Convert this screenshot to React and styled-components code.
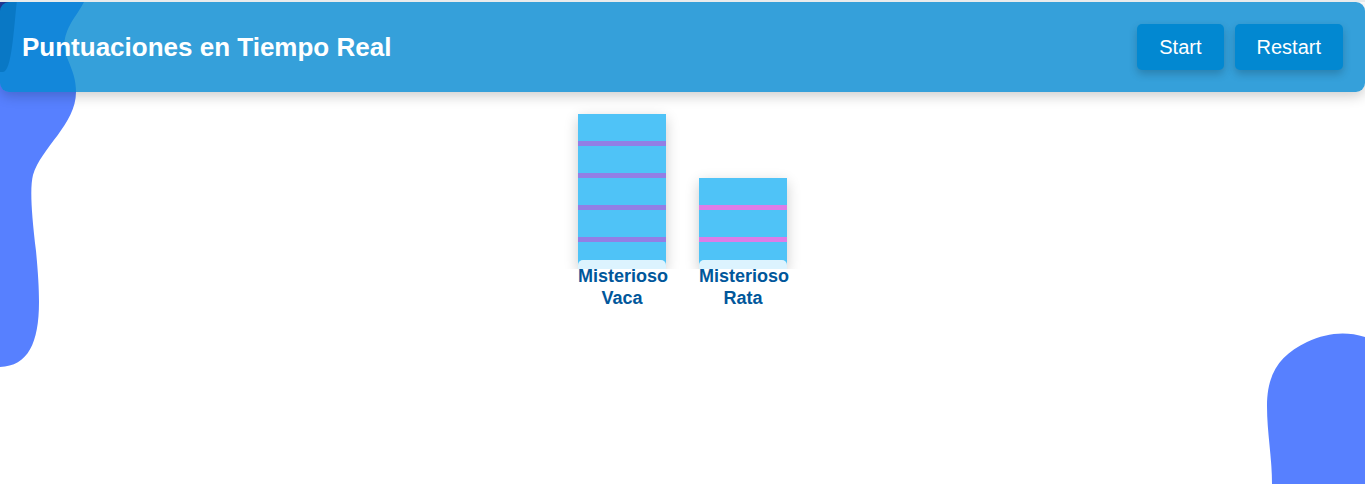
import React from "react";
import styled, { createGlobalStyle } from "styled-components";

const GlobalStyle = createGlobalStyle`
  * { box-sizing: border-box; }
  body {
    margin: 0;
    background: #fff;
    font-family: Arial, "Liberation Sans", sans-serif;
  }
`;

const Page = styled.div`
  position: relative;
  min-height: 100vh;
  overflow: hidden;
  border-top: 2px solid #e9ebec;
`;

const LeftBlob = styled.svg`
  position: absolute;
  top: 0;
  left: 0;
`;

const RightBlob = styled.svg`
  position: absolute;
  right: 0;
  bottom: 0;
`;

const Header = styled.header`
  position: relative;
  display: flex;
  align-items: center;
  justify-content: space-between;
  padding: 22px;
  border-radius: 9px;
  background: rgba(2, 136, 209, 0.8);
  box-shadow: 0 4px 13px rgba(0, 0, 0, 0.2);
`;

const Title = styled.h1`
  margin: 0;
  color: #fff;
  font-size: 26px;
  line-height: 30px;
`;

const Actions = styled.div`
  display: flex;
  gap: 11px;
`;

const Button = styled.button`
  padding: 11px 22px;
  border: 0;
  border-radius: 5px;
  background: #0288d1;
  color: #fff;
  font-family: inherit;
  font-size: 20px;
  line-height: 24px;
  box-shadow: 0 4px 9px rgba(0, 0, 0, 0.2);
  cursor: pointer;
`;

const Chart = styled.main`
  position: relative;
  display: flex;
  justify-content: center;
  align-items: flex-end;
  gap: 33px;
  padding: 22px;
`;

const Player = styled.div`
  display: flex;
  flex-direction: column;
  width: 88px;
`;

const Bar = styled.div`
  height: ${(p) => p.$score * 32 + 27}px;
  background: repeating-linear-gradient(
    #4fc3f7 0 27px,
    ${(p) => p.$stripe} 27px 32px
  );
  box-shadow: 0 4px 13px rgba(0, 0, 0, 0.2);
  clip-path: inset(-22px -22px 0);
`;

const Name = styled.div`
  position: relative;
  margin-top: -9px;
  padding: 5px 0;
  border-radius: 5px;
  background: rgba(255, 255, 255, 0.8);
  color: #01579b;
  font-size: 18px;
  font-weight: bold;
  line-height: 22px;
  text-align: center;
`;

const players = [
  { name: "Misterioso Vaca", score: 4, stripe: "#937ee5" },
  { name: "Misterioso Rata", score: 2, stripe: "#dc7ce7" },
];

export default function App() {
  return (
    <Page>
      <GlobalStyle />
      <LeftBlob width="90" height="370" viewBox="0 2 90 370" aria-hidden="true">
        <path
          fill="#5780ff"
          d="M0 0H85C79 12 74 17 70 25C61 42 65 51 68 60C73 72 76 80 76 92C76 124 41 148 33 175C30 187 31 210 36 251C38 272 39 287 39 302C39 343 28 366 0 367Z"
        />
        <path fill="#233a96" d="M0 0H17C14 25 12 72 3 72H0Z" />
      </LeftBlob>
      <RightBlob width="100" height="152" viewBox="0 0 100 152" aria-hidden="true">
        <path
          fill="#5780ff"
          d="M100 5C80 -1 62 1 42 10C17 22 2 39 2 74C2 101 7 124 7 152H100Z"
        />
      </RightBlob>
      <Header>
        <Title>Puntuaciones en Tiempo Real</Title>
        <Actions>
          <Button type="button">Start</Button>
          <Button type="button">Restart</Button>
        </Actions>
      </Header>
      <Chart>
        {players.map((p) => (
          <Player key={p.name}>
            <Bar $score={p.score} $stripe={p.stripe} />
            <Name>{p.name}</Name>
          </Player>
        ))}
      </Chart>
    </Page>
  );
}
